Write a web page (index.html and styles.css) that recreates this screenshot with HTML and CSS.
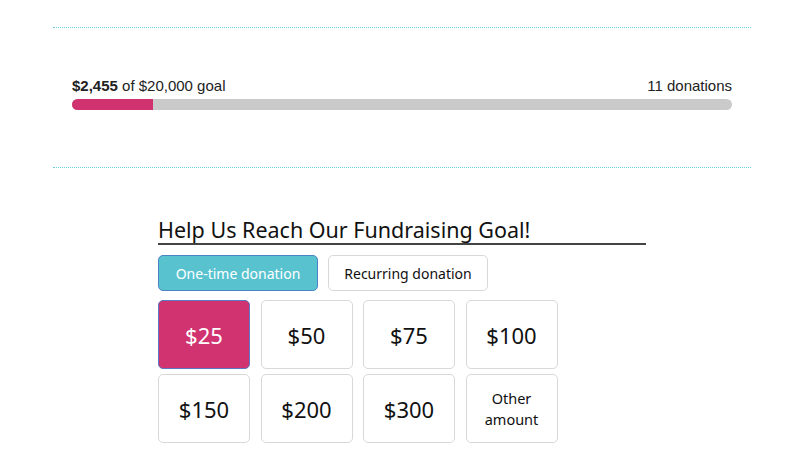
FILE: index.html
```html
<!DOCTYPE html>
<html lang="en">

<head>
    <meta charset="UTF-8">
    <meta name="viewport" content="width=device-width, initial-scale=1.0">
    <title>Fundraiser</title>
    <link rel="stylesheet" href="styles.css">
</head>

<body>
    <div class="progress-block">
        <div class="progress-info">
            <span><strong>$2,455</strong> of $20,000 goal</span>
            <span>11 donations</span>
        </div>
        <div class="progress-bar">
            <div class="progress-fill" style="width: 12.3%;"></div>
        </div>
    </div>

    <div class="donate">
        <h2>Help Us Reach Our Fundraising Goal!</h2>

        <div class="tabs">
            <button class="tab active">One-time donation</button>
            <button class="tab">Recurring donation</button>
        </div>

        <div class="amounts">
            <button class="amount selected">$25</button>
            <button class="amount">$50</button>
            <button class="amount">$75</button>
            <button class="amount">$100</button>
            <button class="amount">$150</button>
            <button class="amount">$200</button>
            <button class="amount">$300</button>
            <button class="amount other">Other<br>amount</button>
        </div>
    </div>
</body>

</html>
```

FILE: styles.css
```css
body {
    font-family: "Noto Sans", sans-serif;
    margin: 0;
    padding: 0;
    background-color: #fff;
    color: #111;
}

.progress-block {
    width: 698px;
    margin: 27px 0 0 53px;
    padding: 49px 19px 57px;
    box-sizing: border-box;
    border-top: 1px dotted #6fcde0;
    border-bottom: 1px dotted #6fcde0;
    font-family: "Liberation Sans", Arial, sans-serif;
    font-size: 15px;
    color: #222;
}

.progress-info {
    display: flex;
    justify-content: space-between;
    margin-bottom: 5px;
}

.progress-bar {
    height: 11px;
    background-color: #cacaca;
    border-radius: 6px;
    overflow: hidden;
}

.progress-fill {
    height: 100%;
    background-color: #d03370;
}

.donate {
    width: 488px;
    margin: 0 0 0 158px;
}

.donate h2 {
    margin: 49px 0 10px;
    font-size: 21.5px;
    font-weight: normal;
    line-height: 26px;
    border-bottom: 2px solid #444;
}

.tabs {
    display: flex;
    gap: 10px;
    margin-bottom: 9px;
}

.tab {
    font-family: "Noto Sans", sans-serif;
    font-size: 14px;
    height: 36px;
    width: 160px;
    background-color: #fff;
    border: 1px solid #d8d8d8;
    border-radius: 5px;
    color: #111;
    cursor: pointer;
}

.tab.active {
    background-color: #58c3cf;
    border-color: #4a84c4;
    color: #fff;
}

.amounts {
    display: grid;
    grid-template-columns: repeat(4, 92px);
    grid-auto-rows: 69px;
    column-gap: 10.5px;
    row-gap: 5px;
}

.amount {
    font-family: "Noto Sans", sans-serif;
    font-size: 22px;
    background-color: #fff;
    border: 1px solid #d8d8d8;
    border-radius: 5px;
    color: #111;
    cursor: pointer;
}

.amount.selected {
    background-color: #d03370;
    border-color: #5a78c4;
    color: #fff;
}

.amount.other {
    font-size: 14.5px;
    line-height: 21px;
}
```
